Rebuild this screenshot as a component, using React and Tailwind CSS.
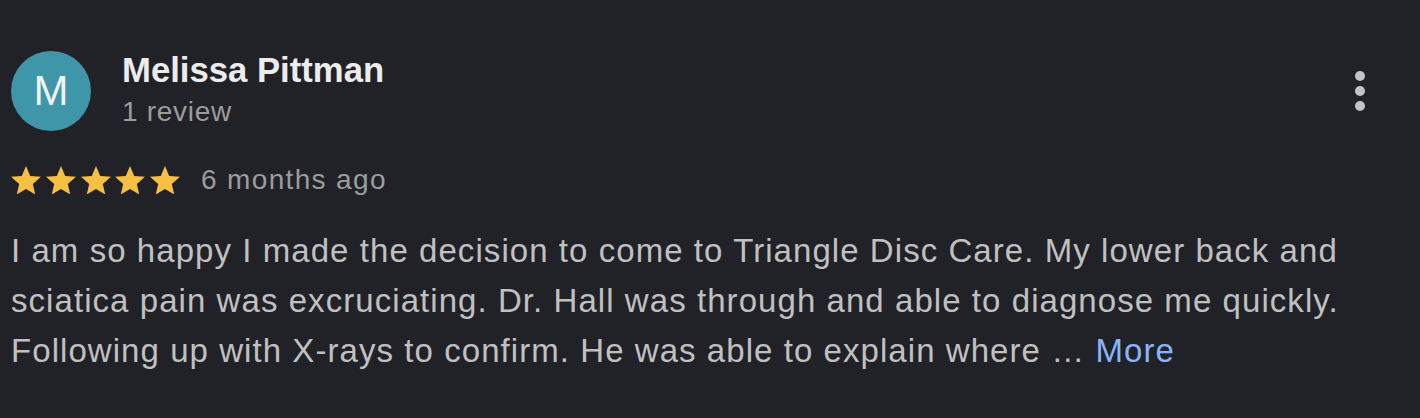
import React from "react";

const Star = () => (
  <svg viewBox="2 2 20 19" className="w-[30px] h-[28.5px]" fill="#f5c043">
    <path d="M12 17.27L18.18 21l-1.64-7.03L22 9.24l-7.19-.61L12 2 9.19 8.63 2 9.24l5.46 4.73L5.82 21z" />
  </svg>
);

export default function App() {
  return (
    <div className="w-[1420px] h-[418px] bg-[#212228] pl-[11px] pr-[55px] pt-[50px] font-['Liberation_Sans',Arial,sans-serif]">
      <div className="flex items-start">
        <div className="mt-[1px] w-[80px] h-[80px] rounded-full bg-[#3f96a8] flex items-center justify-center text-[#f1f1f1] text-[42px] leading-none">
          M
        </div>
        <div className="ml-[31px] flex flex-col flex-1">
          <div className="text-[34.7px] leading-[40px] font-bold text-[#ececec]">Melissa Pittman</div>
          <div className="text-[28px] leading-[44px] tracking-[0.7px] text-[#9c9c9c]">1 review</div>
        </div>
        <div className="mt-[21px] flex flex-col items-center gap-[5px] w-[10px]">
          <span className="w-[10px] h-[10px] rounded-full bg-[#c4c4c4]"></span>
          <span className="w-[10px] h-[10px] rounded-full bg-[#c4c4c4]"></span>
          <span className="w-[10px] h-[10px] rounded-full bg-[#c4c4c4]"></span>
        </div>
      </div>
      <div className="mt-[26px] flex items-center h-[40px]">
        <div className="flex items-center gap-[4.75px]">
          <Star />
          <Star />
          <Star />
          <Star />
          <Star />
        </div>
        <div className="ml-[21px] text-[28px] leading-[40px] tracking-[1.35px] text-[#9c9c9c]">6 months ago</div>
      </div>
      <div className="mt-[26px] w-[1345px] text-[33px] leading-[50px] tracking-[1.06px] text-[#c0c0c0]">
        I am so happy I made the decision to come to Triangle Disc Care. My lower back and sciatica pain was
        excruciating. Dr. Hall was through and able to diagnose me quickly. Following up with X-rays to confirm. He
        was able to explain where …{" "}
        <span className="text-[#8ab4f8]">More</span>
      </div>
    </div>
  );
}
